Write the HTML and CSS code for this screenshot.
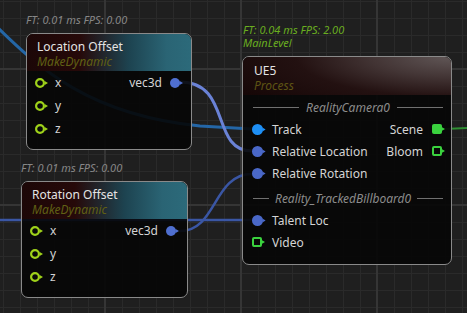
FILE: index.html
```html
<!DOCTYPE html>
<html>
<head>
<meta charset="utf-8">
<link rel="stylesheet" href="styles.css">
</head>
<body>
<div class="canvas">
  <svg class="wires" width="467" height="313" viewBox="0 0 467 313">
    <path class="w-track" d="M -10 20 C 40 70, 90 115, 200 126 L 252 129"/>
    <path class="w-talent" d="M 0 220 L 252 220"/>
    <path class="w-rot" d="M 180 231 C 217 231, 213 174, 252 174"/>
    <path class="w-loc" d="M 180 82 C 232 82, 210 151, 252 151"/>
    <path class="w-scene" d="M 444 129 L 467 128"/>
  </svg>

  <div class="node-wrap n-loc">
    <div class="stats">FT: 0.01 ms FPS: 0.00</div>
    <div class="node">
      <div class="head head-teal">
        <div class="title">Location Offset</div>
        <div class="sub">MakeDynamic</div>
      </div>
      <div class="body">
        <div class="row">
          <div class="in"><svg class="pin" width="14" height="10" viewBox="0 0 14 10"><circle cx="5" cy="5" r="3.9" fill="none" stroke="#9ed11a" stroke-width="2.2"/><polygon points="9.6,3 13,5 9.6,7" fill="#9ed11a"/></svg><span>x</span></div>
          <div class="out"><span>vec3d</span><svg class="pin" width="14" height="10" viewBox="0 0 14 10"><circle cx="5" cy="5" r="5" fill="#4f6fd0"/><polygon points="9.6,3 13,5 9.6,7" fill="#4f6fd0"/></svg></div>
        </div>
        <div class="row">
          <div class="in"><svg class="pin" width="14" height="10" viewBox="0 0 14 10"><circle cx="5" cy="5" r="3.9" fill="none" stroke="#9ed11a" stroke-width="2.2"/><polygon points="9.6,3 13,5 9.6,7" fill="#9ed11a"/></svg><span>y</span></div>
        </div>
        <div class="row">
          <div class="in"><svg class="pin" width="14" height="10" viewBox="0 0 14 10"><circle cx="5" cy="5" r="3.9" fill="none" stroke="#9ed11a" stroke-width="2.2"/><polygon points="9.6,3 13,5 9.6,7" fill="#9ed11a"/></svg><span>z</span></div>
        </div>
      </div>
    </div>
  </div>

  <div class="node-wrap n-rot">
    <div class="stats">FT: 0.01 ms FPS: 0.00</div>
    <div class="node">
      <div class="head head-teal">
        <div class="title">Rotation Offset</div>
        <div class="sub">MakeDynamic</div>
      </div>
      <div class="body">
        <div class="row">
          <div class="in"><svg class="pin" width="14" height="10" viewBox="0 0 14 10"><circle cx="5" cy="5" r="3.9" fill="none" stroke="#9ed11a" stroke-width="2.2"/><polygon points="9.6,3 13,5 9.6,7" fill="#9ed11a"/></svg><span>x</span></div>
          <div class="out"><span>vec3d</span><svg class="pin" width="14" height="10" viewBox="0 0 14 10"><circle cx="5" cy="5" r="5" fill="#4f6fd0"/><polygon points="9.6,3 13,5 9.6,7" fill="#4f6fd0"/></svg></div>
        </div>
        <div class="row">
          <div class="in"><svg class="pin" width="14" height="10" viewBox="0 0 14 10"><circle cx="5" cy="5" r="3.9" fill="none" stroke="#9ed11a" stroke-width="2.2"/><polygon points="9.6,3 13,5 9.6,7" fill="#9ed11a"/></svg><span>y</span></div>
        </div>
        <div class="row">
          <div class="in"><svg class="pin" width="14" height="10" viewBox="0 0 14 10"><circle cx="5" cy="5" r="3.9" fill="none" stroke="#9ed11a" stroke-width="2.2"/><polygon points="9.6,3 13,5 9.6,7" fill="#9ed11a"/></svg><span>z</span></div>
        </div>
      </div>
    </div>
  </div>

  <div class="node-wrap n-ue5">
    <div class="stats green"><div class="stat-line">FT: 0.04 ms FPS: 2.00</div><div class="stat-line">MainLevel</div></div>
    <div class="node">
      <div class="head head-brown">
        <div class="title">UE5</div>
        <div class="sub">Process</div>
      </div>
      <div class="body body-ue5">
        <div class="section"><span class="line"></span><span class="sec-text">RealityCamera0</span><span class="line"></span></div>
        <div class="row">
          <div class="in"><svg class="pin" width="14" height="11" viewBox="0 0 14 11"><circle cx="5.5" cy="5.5" r="5.5" fill="#1e8ff5"/><polygon points="10.4,3.5 13.6,5.5 10.4,7.5" fill="#1e8ff5"/></svg><span>Track</span></div>
          <div class="out"><span>Scene</span><svg class="pin" width="13" height="10" viewBox="0 0 13 10"><rect x="0" y="0" width="10" height="10" rx="2" fill="#3ad23e"/><polygon points="9.6,3 13,5 9.6,7" fill="#3ad23e"/></svg></div>
        </div>
        <div class="row">
          <div class="in"><svg class="pin" width="14" height="11" viewBox="0 0 14 11"><circle cx="5.5" cy="5.5" r="5.5" fill="#4a68c8"/><polygon points="10.4,3.5 13.6,5.5 10.4,7.5" fill="#4a68c8"/></svg><span>Relative Location</span></div>
          <div class="out"><span>Bloom</span><svg class="pin" width="13" height="10" viewBox="0 0 13 10"><rect x="1" y="1" width="8" height="8" rx="1" fill="none" stroke="#3ad23e" stroke-width="2"/><polygon points="9.6,3 13,5 9.6,7" fill="#3ad23e"/></svg></div>
        </div>
        <div class="row">
          <div class="in"><svg class="pin" width="14" height="11" viewBox="0 0 14 11"><circle cx="5.5" cy="5.5" r="5.5" fill="#4a68c8"/><polygon points="10.4,3.5 13.6,5.5 10.4,7.5" fill="#4a68c8"/></svg><span>Relative Rotation</span></div>
        </div>
        <div class="section sec2"><span class="line short"></span><span class="sec-text">Reality_TrackedBillboard0</span><span class="line"></span></div>
        <div class="row">
          <div class="in"><svg class="pin" width="14" height="11" viewBox="0 0 14 11"><circle cx="5.5" cy="5.5" r="5.5" fill="#4a68c8"/><polygon points="10.4,3.5 13.6,5.5 10.4,7.5" fill="#4a68c8"/></svg><span>Talent Loc</span></div>
        </div>
        <div class="row">
          <div class="in"><svg class="pin" width="14" height="10" viewBox="0 0 14 10"><rect x="1" y="1" width="8" height="8" rx="1" fill="none" stroke="#3ad23e" stroke-width="2"/><polygon points="9.6,3 13,5 9.6,7" fill="#3ad23e"/></svg><span>Video</span></div>
        </div>
      </div>
    </div>
  </div>
</div>
</body>
</html>
```

FILE: styles.css
```css
html, body {
  margin: 0;
  padding: 0;
  background: #1f1f1f;
}

.canvas {
  position: relative;
  width: 467px;
  height: 313px;
  overflow: hidden;
  font-family: "Noto Sans", "Open Sans", sans-serif;
  background-color: #1f1f1f;
  background-image:
    linear-gradient(to right, #353535 2px, transparent 2px),
    linear-gradient(to bottom, #353535 2px, transparent 2px),
    linear-gradient(to right, #2a2a2a 1px, transparent 1px),
    linear-gradient(to bottom, #2a2a2a 1px, transparent 1px);
  background-size: 136px 100%, 100% 136px, 17px 100%, 100% 17px;
  background-position: 104px 0, 0 68px, 3px 0, 0 1px;
}

.wires {
  position: absolute;
  left: 0;
  top: 0;
}

.wires path {
  fill: none;
  stroke-linecap: round;
}

.w-track { stroke: #2466a6; stroke-width: 3; }
.w-talent { stroke: #3a56a4; stroke-width: 2.5; }
.w-rot { stroke: #3a56a4; stroke-width: 2.5; }
.w-loc { stroke: #6a82d6; stroke-width: 3; }
.w-scene { stroke: #2f8f33; stroke-width: 2; }

.node-wrap {
  position: absolute;
  display: flex;
  flex-direction: column;
  gap: 7px;
}

.n-loc { left: 26px; top: 13px; width: 166px; }
.n-rot { left: 21px; top: 161px; width: 167px; }
.n-ue5 { left: 242px; top: 23px; width: 210px; }

.stats {
  font-size: 11px;
  font-style: italic;
  line-height: 13px;
  height: 13px;
  color: #878787;
  white-space: nowrap;
}

.stats.green {
  height: 26px;
  color: #6aae1f;
  padding-left: 1px;
}

.stat-line {
  height: 13px;
}

.node {
  box-sizing: border-box;
  height: 117px;
  border: 1px solid #8a8a8a;
  border-radius: 7px;
  background: rgba(6, 6, 6, 0.9);
  overflow: hidden;
}

.n-ue5 .node { height: 209px; }

.head {
  box-sizing: border-box;
  height: 37px;
  padding: 5px 10px 0 10px;
}

.n-ue5 .head {
  height: 38px;
  padding: 6px 11px 0 11px;
}

.head-teal {
  background: linear-gradient(to right, #1c0707 0%, #260909 32%, #1d4350 62%, #2a6474 85%, #2c6a7a 100%);
}

.head-brown {
  background: radial-gradient(ellipse 120% 170% at 100% 0%, #605656 0%, #443636 30%, #231111 62%, #160707 100%);
}

.title {
  font-size: 12px;
  line-height: 15px;
  height: 15px;
  color: #e4e4e4;
}

.sub {
  font-size: 12px;
  font-style: italic;
  line-height: 15px;
  height: 15px;
  color: #606014;
}

.head-brown .sub { color: #5e5414; }

.body {
  padding: 0 7px 0 8px;
}

.body-ue5 {
  padding: 1px 6px 0 9px;
}

.row {
  display: flex;
  align-items: center;
  justify-content: space-between;
  height: 23px;
  font-size: 12px;
  color: #d4d4d4;
}

.body-ue5 .row { height: 22px; }

.in, .out {
  display: flex;
  align-items: center;
  gap: 6px;
}

.out { gap: 8px; }
.body-ue5 .out { gap: 9px; }

.pin { display: block; }

.section {
  display: flex;
  align-items: center;
  gap: 7px;
  height: 22px;
  padding: 0 0 0 1px;
  margin-right: 2px;
}

.sec2 { margin-top: 3px; gap: 6px; }

.line {
  flex: 1;
  height: 1px;
  background: #707070;
}

.line.short { flex: 0 0 16px; }

.sec-text {
  font-size: 12px;
  font-style: italic;
  color: #8c8c8c;
  white-space: nowrap;
}
```
